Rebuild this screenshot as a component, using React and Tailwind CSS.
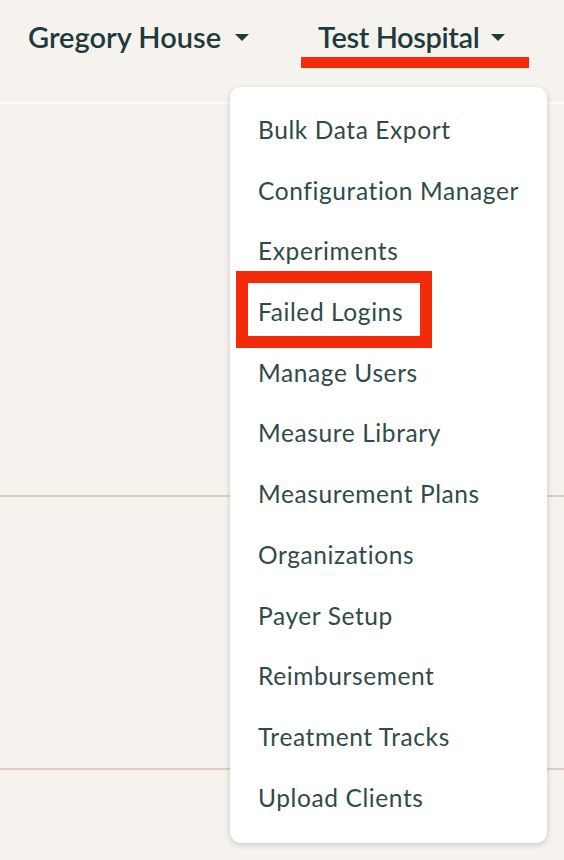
import React from 'react';

const menuItems = [
  'Bulk Data Export',
  'Configuration Manager',
  'Experiments',
  'Failed Logins',
  'Manage Users',
  'Measure Library',
  'Measurement Plans',
  'Organizations',
  'Payer Setup',
  'Reimbursement',
  'Treatment Tracks',
  'Upload Clients',
];

// small filled caret next to the nav names
const Caret = () => (
  <svg width="14" height="7" viewBox="0 0 14 7" className="shrink-0">
    <path d="M0 0 H14 L7 7 Z" fill="#1e3a3c" />
  </svg>
);

export default function App() {
  return (
    <div className="relative min-h-[860px] w-full overflow-hidden bg-[#f6f3ef] font-['Lato','Open_Sans',sans-serif]">
      {/* Top bar */}
      <div className="h-[104px] flex items-start pl-[10px] pt-[19px] border-b-2 border-[#fdfcfb]">
        <button className="flex items-center gap-[14px] px-[18px] text-[29px] leading-[36px] font-semibold text-[#1e3a3c]">
          Gregory House
          <Caret />
        </button>
        <button className="relative ml-[34px] flex items-center gap-[12px] pl-[17px] pr-[24px] text-[29px] leading-[36px] font-semibold tracking-[-0.4px] text-[#1e3a3c]">
          Test Hospital
          <Caret />
          <span className="absolute left-0 right-0 top-[38px] h-[11px] bg-[#f52a0a]" />
        </button>
      </div>

      {/* Page rows behind the menu */}
      <div className="h-[393px] border-b-2 border-[#e0cdbd]" />
      <div className="h-[273px] border-b-2 border-[#e0cdbd]" />

      {/* Dropdown menu */}
      <div className="absolute left-[230px] top-[87px] w-[317px] rounded-[11px] bg-white pt-[13px] pb-[15px] shadow-[0_2px_6px_rgba(0,0,0,0.18)]">
        {menuItems.map((item) => (
          <div
            key={item}
            className="relative pl-[28px] h-[60.7px] leading-[60.7px] text-[24.5px] tracking-[0.6px] text-[#2f4b49]"
          >
            {item}
            {item === 'Failed Logins' && (
              <span className="absolute left-[6px] top-[-11px] w-[196px] h-[77px] border-[12px] border-[#f52a0a]" />
            )}
          </div>
        ))}
      </div>
    </div>
  );
}
